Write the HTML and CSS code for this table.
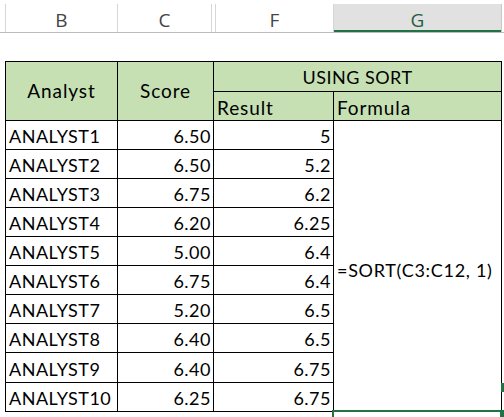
FILE: index.html
```html
<!DOCTYPE html>
<html>
<head>
<meta charset="utf-8">
<link rel="stylesheet" href="styles.css">
</head>
<body>
<div class="sheet">
  <div class="colhdr">
    <div class="ch ch-corner"></div>
    <div class="ch ch-b">B</div>
    <div class="ch ch-c">C</div>
    <div class="ch ch-hidden"></div>
    <div class="ch ch-f">F</div>
    <div class="ch ch-g">G</div>
  </div>
  <div class="grid">
    <div class="c hd center mixed span-r2">Analyst</div>
    <div class="c hd center mixed span-r2">Score</div>
    <div class="c hd center span-c2">USING SORT</div>
    <div class="c hd left sub mixed">Result</div>
    <div class="c hd left sub mixed">Formula</div>

    <div class="c left">ANALYST1</div><div class="c right">6.50</div><div class="c right">5</div>
    <div class="c formula">=SORT(C3:C12, 1)</div>
    <div class="c left">ANALYST2</div><div class="c right">6.50</div><div class="c right">5.2</div>
    <div class="c left">ANALYST3</div><div class="c right">6.75</div><div class="c right">6.2</div>
    <div class="c left">ANALYST4</div><div class="c right">6.20</div><div class="c right">6.25</div>
    <div class="c left">ANALYST5</div><div class="c right">5.00</div><div class="c right">6.4</div>
    <div class="c left">ANALYST6</div><div class="c right">6.75</div><div class="c right">6.4</div>
    <div class="c left">ANALYST7</div><div class="c right">5.20</div><div class="c right">6.5</div>
    <div class="c left">ANALYST8</div><div class="c right">6.40</div><div class="c right">6.5</div>
    <div class="c left">ANALYST9</div><div class="c right">6.40</div><div class="c right">6.75</div>
    <div class="c left">ANALYST10</div><div class="c right">6.25</div><div class="c right">6.75</div>
  </div>
  <div class="sel-box"></div>
  <div class="sel-handle"></div>
  <div class="sel-mark"></div>
</div>
</body>
</html>
```

FILE: styles.css
```css
html, body {
  margin: 0;
  padding: 0;
  background: #ffffff;
}
.sheet {
  position: relative;
  width: 504px;
  height: 417px;
  overflow: hidden;
  background: #ffffff;
}
.colhdr {
  display: flex;
  margin-top: 4px;
  height: 28px;
  border-bottom: 1px solid #bcbcbc;
  font-family: "Open Sans", "Noto Sans", sans-serif;
  font-size: 19px;
  color: #444444;
}
.ch {
  box-sizing: border-box;
  display: flex;
  align-items: center;
  justify-content: center;
  border-right: 1px solid #d6d6d6;
  height: 28px;
  padding-top: 4px;
  line-height: 24px;
}
.ch-corner { width: 6px; }
.ch-b { width: 112px; }
.ch-c { width: 94px; }
.ch-hidden { width: 4px; }
.ch-f { width: 118px; }
.ch-g {
  width: 168px;
  background: #e1e1e1;
  color: #1f5f3c;
  box-shadow: inset 0 -2px 0 #217346;
  border-right-color: #c8c8c8;
}
.grid {
  display: grid;
  margin-top: 28px;
  margin-left: 5px;
  width: 495px;
  padding: 1px;
  gap: 1px;
  background: #000000;
  grid-template-columns: 111px 95px 119px 167px;
  grid-template-rows: 29px 28px 28px 28px 28px 28px 28px 28px 28px 28px 29px 28px;
  font-family: "Lato", "Liberation Sans", sans-serif;
  font-size: 18px;
  letter-spacing: 0.5px;
  color: #000000;
}
.c {
  background: #ffffff;
  display: flex;
  align-items: flex-end;
  padding: 0 3px 3px 3px;
  line-height: 20px;
  white-space: nowrap;
  overflow: hidden;
}
.hd { background: #c6e0b4; }
.mixed { font-size: 19px; letter-spacing: 0.9px; }
.sub { padding-bottom: 2px; }
.center { justify-content: center; align-items: center; padding-bottom: 0; }
.left { justify-content: flex-start; }
.right { justify-content: flex-end; padding-right: 2px; }
.span-r2 { grid-row: span 2; }
.span-c2 { grid-column: span 2; }
.formula {
  grid-column: 4;
  grid-row: 3 / span 10;
  align-items: center;
  padding-bottom: 0;
  padding-top: 7px;
  letter-spacing: 0.7px;
}
.sel-box {
  position: absolute;
  left: 332px;
  top: 410px;
  width: 200px;
  height: 40px;
  border-top: 2px solid #217346;
  border-left: 2px solid #217346;
}
.sel-handle {
  position: absolute;
  left: 500px;
  top: 410px;
  width: 5px;
  height: 7px;
  background: #217346;
}
.sel-mark {
  position: absolute;
  left: 501px;
  top: 383px;
  width: 3px;
  height: 9px;
  background: #217346;
}
```
